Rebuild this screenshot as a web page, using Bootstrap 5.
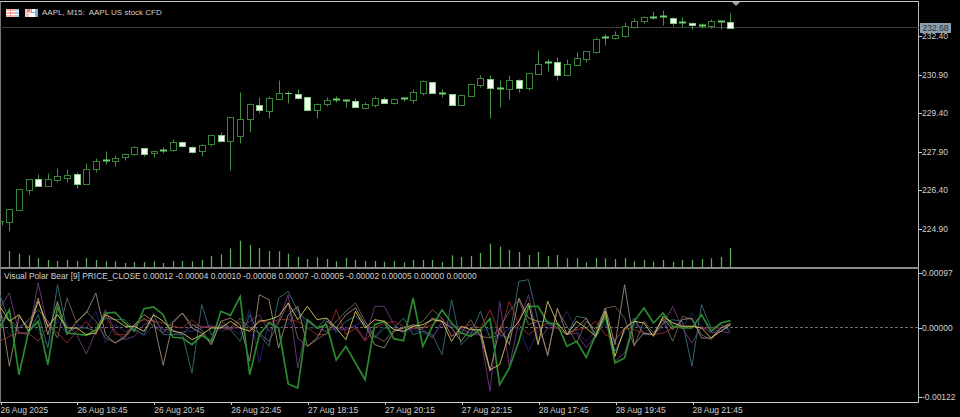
<!DOCTYPE html>
<html lang="en">
<head>
<meta charset="utf-8">
<title>AAPL, M15</title>
<link href="https://cdn.jsdelivr.net/npm/bootstrap@5.3.0/dist/css/bootstrap.min.css" rel="stylesheet">
<style>
html,body{height:100%;background:#000;overflow:hidden;margin:0}
body{font-family:"Liberation Sans",Arial,sans-serif;font-size:8.5px;color:#d0d0d0;line-height:12px}
.term{width:960px;height:417px;background:#000}
.plot-col{width:919px;flex:none}
.axis-col{width:41px;flex:none}
.main-pane{height:266px;margin-top:1px;border-top:1px solid #c8c8c8;border-left:1px solid #777;border-right:1px solid #b8b8b8}
.sub-pane{height:136px;border-top:2px solid #8a8a8a;border-bottom:1px solid #cfcfcf;border-left:1px solid #777;border-right:1px solid #b8b8b8}
.chart-svg{display:block;position:absolute;left:-1px;top:-2px;width:919px}
.legend-a{left:5px;top:5px;gap:6px}
.legend-a .name{margin-left:-2px;white-space:pre;font-size:8px}
.legend-b{left:3px;top:1px;white-space:nowrap;font-size:8.35px}
.time-row{height:14px;padding-left:.5px;padding-top:0}
.time-cell{width:76.9px;flex:none;position:relative;white-space:nowrap;padding-top:1px}
.time-cell::before{content:"";position:absolute;left:0;top:0;width:1px;height:2px;background:#cfcfcf}
.price-scale{padding-top:29px}
.price-cell{height:38.6px;line-height:15px;padding-left:3px;position:relative}
.price-cell::before{content:"";position:absolute;left:0;top:7px;width:3px;height:1px;background:#cfcfcf}
.price-tag{position:absolute;left:1px;top:23px;width:31px;height:10px;line-height:10px;background:#8c9dae;color:#26303a;text-align:center;font-size:8.5px}
.sub-scale{height:134px;margin-top:0}
.sub-cell{height:12px;line-height:12px;padding-left:3px;position:relative}
.sub-cell::before{content:"";position:absolute;left:0;top:6px;width:3px;height:1px;background:#cfcfcf}
.sub-mid{margin-top:43px}
.sub-low{margin-top:57px}
.sub-first{margin-top:267px}
</style>
</head>
<body>
<div class="term d-flex">
  <div class="plot-col d-flex flex-column">
    <div class="main-pane position-relative">
      <svg id="mainSvg" class="chart-svg" width="919" height="268" viewBox="0 0 919 268" aria-label="AAPL candlesticks and volume"></svg>
      <div class="legend-a position-absolute d-flex align-items-center">
        <svg width="13" height="8" viewBox="0 0 13 8"><rect width="13" height="8" fill="#f6b9ae"/><path d="M0 2.5h13M0 5.5h13" stroke="#fff" stroke-width="1"/><path d="M9 0h4v8H9z" fill="#9cc9ea" opacity=".85"/><path d="M9 2.5h4M9 5.5h4" stroke="#fff" stroke-width="1"/><path d="M4.5 0v8" stroke="#e58f84" stroke-width=".8"/></svg>
        <svg width="13" height="8" viewBox="0 0 13 8"><rect width="13" height="8" fill="#f6c3bb"/><path d="M6 0h7v8H6z" fill="#6fb6e6"/><path d="M2 0h3v3H2z" fill="#e2807a"/><path d="M7 0h3v3H7z" fill="#fff"/><path d="M4 4h6v4H4z" fill="#fff"/></svg>
        <span class="name">AAPL, M15:  AAPL US stock CFD</span>
      </div>
    </div>
    <div class="sub-pane position-relative">
      <svg id="subSvg" class="chart-svg" width="919" height="136" viewBox="0 0 919 136" aria-label="Visual Polar Bear indicator"></svg>
      <div class="legend-b position-absolute">Visual Polar Bear [9] PRICE_CLOSE 0.00012 -0.00004 0.00010 -0.00008 0.00007 -0.00005 -0.00002 0.00005 0.00000 0.00000</div>
    </div>
    <div class="time-row d-flex">
      <div class="time-cell">26 Aug 2025</div>
      <div class="time-cell">26 Aug 18:45</div>
      <div class="time-cell">26 Aug 20:45</div>
      <div class="time-cell">26 Aug 22:45</div>
      <div class="time-cell">27 Aug 18:15</div>
      <div class="time-cell">27 Aug 20:15</div>
      <div class="time-cell">27 Aug 22:15</div>
      <div class="time-cell">28 Aug 17:45</div>
      <div class="time-cell">28 Aug 19:45</div>
      <div class="time-cell">28 Aug 21:45</div>
    </div>
  </div>
  <div class="axis-col position-relative">
    <div class="price-scale">
      <div class="price-cell">232.40</div>
      <div class="price-cell">230.90</div>
      <div class="price-cell">229.40</div>
      <div class="price-cell">227.90</div>
      <div class="price-cell">226.40</div>
      <div class="price-cell">224.90</div>
    </div>
    <div class="price-tag">232.68</div>
    <div class="sub-scale position-absolute top-0 start-0">
      <div class="sub-cell sub-first">0.00097</div>
      <div class="sub-cell sub-mid">0.00000</div>
      <div class="sub-cell sub-low">-0.00122</div>
    </div>
  </div>
</div>
<script>
var NS='http://www.w3.org/2000/svg';
function el(p,t,a){var e=document.createElementNS(NS,t);for(var k in a)e.setAttribute(k,a[k]);p.appendChild(e);return e;}
var X0=9.4,DX=9.613;
function xi(i){return Math.round(X0+DX*i)+.5;}
var C=[[627,665,627,692,0],[567,629,567,629,0],[537,569,537,582,0],[538,559,522,559,1],[538,557,519,557,0],[529,539,505,547,0],[524,534,507,547,0],[523,551,515,565,1],[506,552,489,552,0],[484,507,475,515,0],[481,485,452,492,2],[474,482,465,497,0],[461,471,459,479,0],[442,463,437,465,0],[443,461,443,469,1],[452,460,450,472,0],[451,452,442,459,2],[425,451,417,453,0],[425,439,422,441,1],[442,455,439,459,1],[434,452,431,469,0],[405,432,403,439,0],[405,422,396,424,1],[352,424,352,510,0],[358,408,277,430,0],[313,358,308,395,0],[316,330,290,340,1],[294,332,288,354,0],[280,296,240,296,0],[278,280,272,308,2],[282,294,268,298,1],[292,330,292,334,1],[313,330,310,355,0],
[301,313,290,318,0],[298,300,288,306,2],[300,303,298,322,2],[304,322,295,325,1],[312,323,305,326,0],[295,315,288,322,0],[298,308,292,310,1],[298,309,295,312,0],[294,298,292,302,2],[275,300,268,308,0],[244,278,240,285,0],[247,278,245,280,1],[278,283,268,290,2],[283,316,283,316,1],[286,314,283,316,0],[252,287,252,287,0],[235,255,226,262,0],[236,264,226,354,1],[264,267,240,320,2],[240,268,224,296,0],[240,264,238,276,1],[220,264,218,270,0],[191,221,150,221,0],[185,190,178,212,2],[187,225,172,240,1],[191,224,178,224,0],[175,194,155,196,0],[154,176,154,186,0],[118,156,112,158,0],[112,119,102,135,2],[104,114,94,116,0],[78,107,65,110,0],[64,80,55,84,0],
[52,63,47,70,0],[50,55,32,56,2],[49,50,30,74,2],[53,70,50,78,1],[67,69,50,80,2],[68,74,66,88,1],[75,77,68,84,2],[62,78,58,84,0],[63,65,64,88,2],[66,84,38,85,1]];
var V=[336,344,349,357,363,366,363,366,357,363,367,367,372,369,369,367,372,366,366,367,363,351,346,328,305,318,327,336,337,344,354,360,355,360,367,357,363,366,366,368,366,370,363,363,363,369,349,354,351,342,314,323,333,339,348,339,351,348,358,358,370,357,358,360,357,367,363,368,363,368,363,363,360,358,354,327];
var m=document.getElementById('mainSvg');
el(m,'line',{x1:0,y1:27.5,x2:919,y2:27.5,stroke:'#3c3c3c','stroke-width':1});
el(m,'path',{d:'M0 221.5h4M2.5 221.5v4',stroke:'#3d8a3d',fill:'none'});
C.forEach(function(c,i){
  var x=xi(i),t=Math.round(c[0]/3)+.5,b=Math.round(c[1]/3)+.5,wt=Math.round(c[2]/3)+.5,wb=Math.round(c[3]/3)+.5;
  el(m,'line',{x1:x,y1:wt,x2:x,y2:wb,stroke:'#458f45','stroke-width':1});
  if(c[4]==0) el(m,'rect',{x:x-3,y:t,width:6,height:Math.max(b-t,1),fill:'#000',stroke:'#3a843a','stroke-width':1});
  else if(c[4]==1) el(m,'rect',{x:x-3,y:t,width:6,height:Math.max(b-t,1),fill:'#f4fff0',stroke:'#86c986','stroke-width':1});
  else el(m,'line',{x1:x-3.5,y1:t,x2:x+3.5,y2:t,stroke:'#6fd06f','stroke-width':b-t>=1?2:1});
});
V.forEach(function(v,i){var x=xi(i);el(m,'line',{x1:x,y1:139+v/3,x2:x,y2:267,stroke:'#62ad62','stroke-width':1.25});});
el(m,'path',{d:'M732 2h8l-4 4z',fill:'#9aa5ae'});
var S={
 blue:{c:'#1f2466',w:1,d:[130,170,150,130,160,205,125,170,140,150,100,195,140,160,150,175,140,155,170,160,160,150,140,160,150,170,95,255,130,150,140,90,150,150,120,165,150,140,130,175,140,150,165,155,165,175,140,145,155,165,160,150,180,150,150,220,160,140,150,100,160,190,160,140,190,150,140,150,170,150,130,150,105,150,160,155,150]},
 teal:{c:'#357078',w:.9,d:[50,130,165,165,110,210,20,160,150,150,160,120,125,125,155,170,110,170,170,170,285,80,170,145,155,190,110,170,205,60,40,100,130,150,120,160,130,115,140,180,150,150,120,170,160,170,230,65,200,170,100,180,170,180,10,5,130,130,150,170,115,120,180,120,220,160,120,170,170,135,125,130,265,80,150,140,160]},
 purple:{c:'#723880',w:.9,d:[90,45,165,170,15,150,110,140,170,228,160,95,160,185,175,140,125,155,155,170,140,145,150,140,150,150,130,110,160,130,50,270,130,150,160,150,155,145,185,85,85,140,160,150,155,180,130,140,150,170,170,340,70,265,130,50,190,150,150,170,165,210,170,110,250,225,130,165,170,140,85,150,195,145,165,160,165]},
 red:{c:'#9c2f2b',w:.9,d:[190,175,165,165,190,145,165,195,160,130,170,110,170,170,140,125,130,135,145,150,125,150,145,150,155,130,160,125,135,125,125,130,150,170,170,95,170,150,190,150,135,130,145,150,150,140,120,175,150,140,150,95,170,70,140,170,150,135,150,170,155,150,130,170,185,150,155,165,170,165,150,145,145,150,150,150,140]},
 pale:{c:'#7e7064',w:.8,d:[115,125,150,125,95,130,180,60,135,100,130,180,195,180,145,120,145,165,130,105,140,155,200,130,150,120,150,165,190,135,75,180,205,185,165,130,100,75,130,175,190,155,150,145,130,95,120,175,165,125,175,180,150,100,65,140,130,235,95,145,195,130,155,90,85,120,205,130,165,125,190,115,125,170,185,150,140]},
 tan:{c:'#a28a76',w:.9,d:[85,265,115,150,60,170,70,170,130,105,45,170,195,175,140,110,130,262,135,105,150,165,200,130,120,140,250,50,65,210,110,85,205,180,130,150,110,90,140,200,210,160,150,140,150,120,130,150,190,150,170,280,150,200,60,120,130,230,90,170,150,120,170,90,200,20,200,165,170,120,155,125,120,180,180,150,135]},
 green:{c:'#2b8a30',w:1.7,d:[150,95,290,160,130,260,85,165,168,172,155,105,103,135,160,92,87,110,178,180,200,172,190,100,112,56,290,170,135,150,318,330,125,150,140,246,205,255,305,140,130,182,188,60,205,145,95,135,165,175,155,122,320,270,190,85,85,135,138,205,190,238,170,110,255,240,130,90,135,105,145,150,150,110,160,135,128]},
 yellow:{c:'#d9c863',w:.9,d:[85,130,110,160,70,145,110,150,150,170,165,110,125,145,145,160,110,130,160,165,185,170,150,150,130,150,160,130,125,115,75,125,85,125,120,150,185,100,150,125,130,155,160,145,140,125,130,190,145,155,155,275,260,165,130,75,200,70,135,170,130,150,175,100,235,150,130,135,175,115,135,145,145,150,180,160,140]}
};
var sub=document.getElementById('subSvg');
el(sub,'line',{x1:0,y1:60.5,x2:919,y2:60.5,stroke:'#6e6e6e','stroke-width':1,'stroke-dasharray':'3 2'});
for(var k in S){var s=S[k],p=s.d.map(function(v,i){return (X0+DX*(i-1)).toFixed(1)+','+(v/3+11).toFixed(1);}).join(' ');
 el(sub,'polyline',{points:p,fill:'none',stroke:s.c,'stroke-width':s.w,'stroke-linejoin':'miter'});}
</script>
<script src="https://cdn.jsdelivr.net/npm/bootstrap@5.3.0/dist/js/bootstrap.bundle.min.js"></script>
</body>
</html>
